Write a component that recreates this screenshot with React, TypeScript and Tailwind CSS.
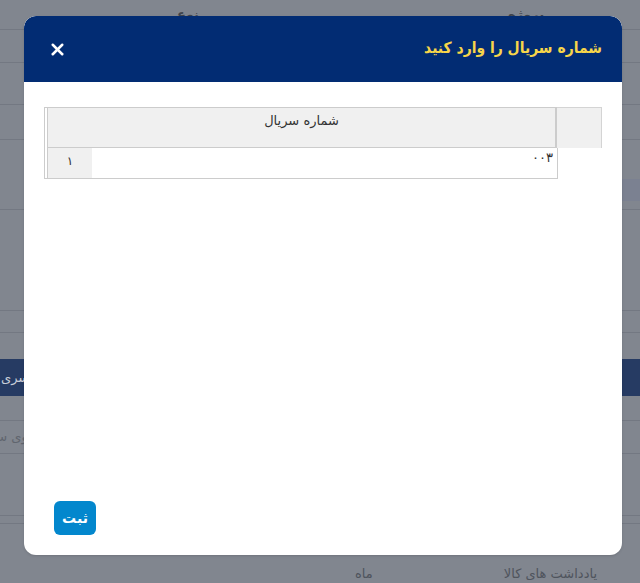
import { X } from 'lucide-react';

const font = { fontFamily: '"DejaVu Sans", "Noto Sans", sans-serif' };
const condensed = { fontFamily: '"DejaVu Sans Condensed", "DejaVu Sans", sans-serif' };

function BackgroundPage() {
  // dimmed page behind the modal
  return (
    <div className="w-full h-full flex flex-col bg-[#81868f] text-[#575c66] text-[13px]">
      <div className="h-[30px] shrink-0 border-b border-[#737882] relative">
        <span className="absolute left-[177px] top-[5px] font-bold text-[#3e434c]">نوع</span>
        <span className="absolute left-[508px] top-[5px] font-bold text-[#3e434c]">پروژه</span>
      </div>
      <div className="h-[33px] shrink-0 border-b border-[#737882]" />
      <div className="h-[42px] shrink-0 border-b border-[#737882]" />
      <div className="h-[35px] shrink-0 border-b border-[#737882]" />
      <div className="h-[39px] shrink-0" />
      <div className="h-[22px] shrink-0 flex">
        <div className="ml-auto w-[220px] bg-[#7b8191]" />
      </div>
      <div className="h-[9px] shrink-0 border-b border-[#737882]" />
      <div className="h-[101px] shrink-0 border-b border-[#737882]" />
      <div className="h-[22px] shrink-0 border-b border-[#737882]" />
      <div className="h-[26px] shrink-0" />
      <div className="h-[37px] shrink-0 bg-[#263b63] flex items-center overflow-hidden">
        <span className="ml-[1px] text-[#c9ced8] whitespace-nowrap" dir="rtl">شماره سری</span>
      </div>
      <div className="h-[25px] shrink-0 border-b border-[#737882]" />
      <div className="h-[33px] shrink-0 border-b border-[#737882] flex items-center overflow-hidden">
        <span className="-ml-[28px] text-[#60656e] whitespace-nowrap" dir="rtl">جستجوی سریال</span>
      </div>
      <div className="h-[62px] shrink-0 border-b border-[#737882]" />
      <div className="h-[8px] shrink-0 border-b border-[#737882]" />
      <div className="flex-1 relative">
        <span className="absolute left-[355px] top-[40px] text-[#4f545d]" dir="rtl">ماه</span>
        <span className="absolute right-[43px] top-[40px] text-[#4f545d]" dir="rtl">یادداشت های کالا</span>
      </div>
    </div>
  );
}

function SerialTable() {
  return (
    <div className="flex w-[558px] text-[13px] text-[#333]">
      {/* thin left strip */}
      <div className="w-[4px] h-[72px] border-l border-r border-t border-b border-[#cccccc]" />
      <div className="flex-1 flex flex-col">
        <div className="flex h-[41px]">
          <div className="flex-1 bg-[#f0f0f0] border-t border-b border-r-2 border-[#cccccc] flex justify-center pt-[3px]">
            <span dir="rtl">شماره سریال</span>
          </div>
          <div className="w-[45px] bg-[#f0f0f0] border-t border-r border-[#d4d4d4]" />
        </div>
        <div className="flex h-[31px] w-[510px] border-b border-r border-[#cccccc]">
          <div className="w-[44px] bg-[#f0f0f0] flex justify-center pt-[4px] text-[12px]">۱</div>
          <div className="flex-1 flex justify-end pr-[4px] text-[13px]">
            <span dir="rtl">۰۰۳</span>
          </div>
        </div>
      </div>
    </div>
  );
}

export default function App() {
  return (
    <div className="relative w-[640px] h-[583px] overflow-hidden" style={font}>
      <BackgroundPage />

      {/* Modal */}
      <div className="absolute left-[24px] top-[16px] w-[598px] h-[539px] bg-white rounded-[12px] overflow-hidden flex flex-col shadow-sm">
        <div className="h-[66px] shrink-0 bg-[#022c73] rounded-t-[12px] flex items-center justify-between pl-[24px] pr-[20px]">
          <X size={19} strokeWidth={3.2} className="text-white" />
          <h2 dir="rtl" className="text-[#f7d54a] text-[15.5px] font-bold" style={condensed}>
            شماره سریال را وارد کنید
          </h2>
        </div>
        <div className="flex-1 flex flex-col justify-between pt-[25px] pb-[20px] pl-[20px] pr-[20px]">
          <SerialTable />
          <div className="pl-[10px]">
            <button className="w-[42px] h-[34px] rounded-[6px] bg-[#0387cd] text-white text-[14px] font-bold">
              ثبت
            </button>
          </div>
        </div>
      </div>
    </div>
  );
}
